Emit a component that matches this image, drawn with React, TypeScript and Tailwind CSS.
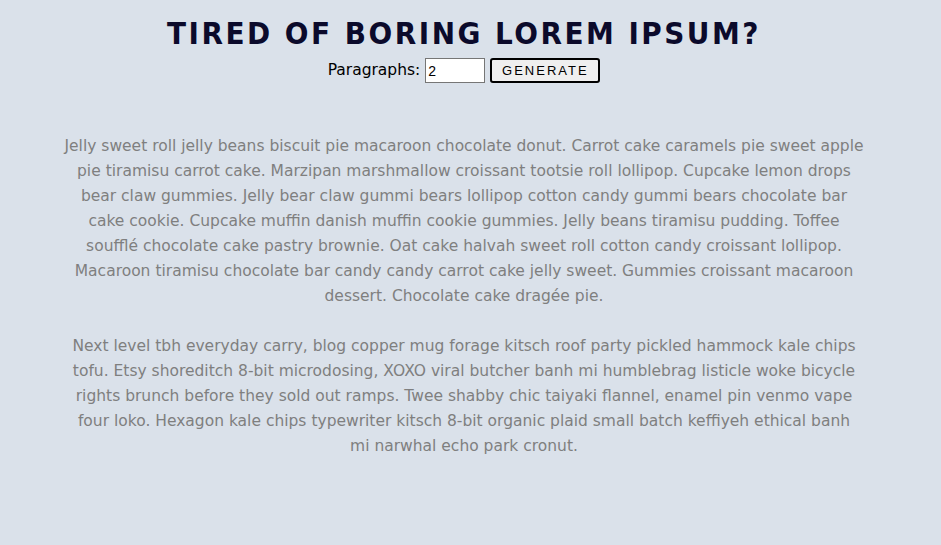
import React, { useState } from 'react';

const PARAS = [
  'Jelly sweet roll jelly beans biscuit pie macaroon chocolate donut. Carrot cake caramels pie sweet apple pie tiramisu carrot cake. Marzipan marshmallow croissant tootsie roll lollipop. Cupcake lemon drops bear claw gummies. Jelly bear claw gummi bears lollipop cotton candy gummi bears chocolate bar cake cookie. Cupcake muffin danish muffin cookie gummies. Jelly beans tiramisu pudding. Toffee soufflé chocolate cake pastry brownie. Oat cake halvah sweet roll cotton candy croissant lollipop. Macaroon tiramisu chocolate bar candy candy carrot cake jelly sweet. Gummies croissant macaroon dessert. Chocolate cake dragée pie.',
  'Next level tbh everyday carry, blog copper mug forage kitsch roof party pickled hammock kale chips tofu. Etsy shoreditch 8-bit microdosing, XOXO viral butcher banh mi humblebrag listicle woke bicycle rights brunch before they sold out ramps. Twee shabby chic taiyaki flannel, enamel pin venmo vape four loko. Hexagon kale chips typewriter kitsch 8-bit organic plaid small batch keffiyeh ethical banh mi narwhal echo park cronut.',
];

export default function App() {
  const [count, setCount] = useState('2');

  return (
    <div className="min-h-[545px] bg-[#dae1ea] pr-[13px] flex flex-col items-center font-['DejaVu_Sans',sans-serif]">
      {/* Header */}
      <h1 className="mt-[13px] text-[31px] leading-[40px] font-bold tracking-[2.5px] uppercase text-[#0b0a2b] font-['DejaVu_Sans_Condensed',sans-serif]">
        Tired of boring lorem ipsum?
      </h1>
      <form className="flex items-center gap-[5px] mt-[5px]" onSubmit={e => e.preventDefault()}>
        <label className="text-[15.5px] text-black">Paragraphs:</label>
        <input
          type="number"
          value={count}
          onChange={e => setCount(e.target.value)}
          className="w-[60px] h-[25px] bg-white border border-[#767676] px-[2px] text-[14px] text-black outline-none font-['Liberation_Sans',sans-serif]"
        />
        <button
          type="submit"
          className="h-[25px] w-[110px] bg-[#efefef] border-2 border-black rounded-[3px] text-[13px] tracking-[2px] text-black font-['Liberation_Sans',sans-serif]"
        >
          GENERATE
        </button>
      </form>

      {/* Generated text */}
      <article className="w-[800px] mt-[51px] text-center text-[15.5px] leading-[25px] text-[#7f7f7f] flex flex-col items-center gap-[25px]">
        <p>{PARAS[0]}</p>
        <p className="w-[794px]">{PARAS[1]}</p>
      </article>
    </div>
  );
}
